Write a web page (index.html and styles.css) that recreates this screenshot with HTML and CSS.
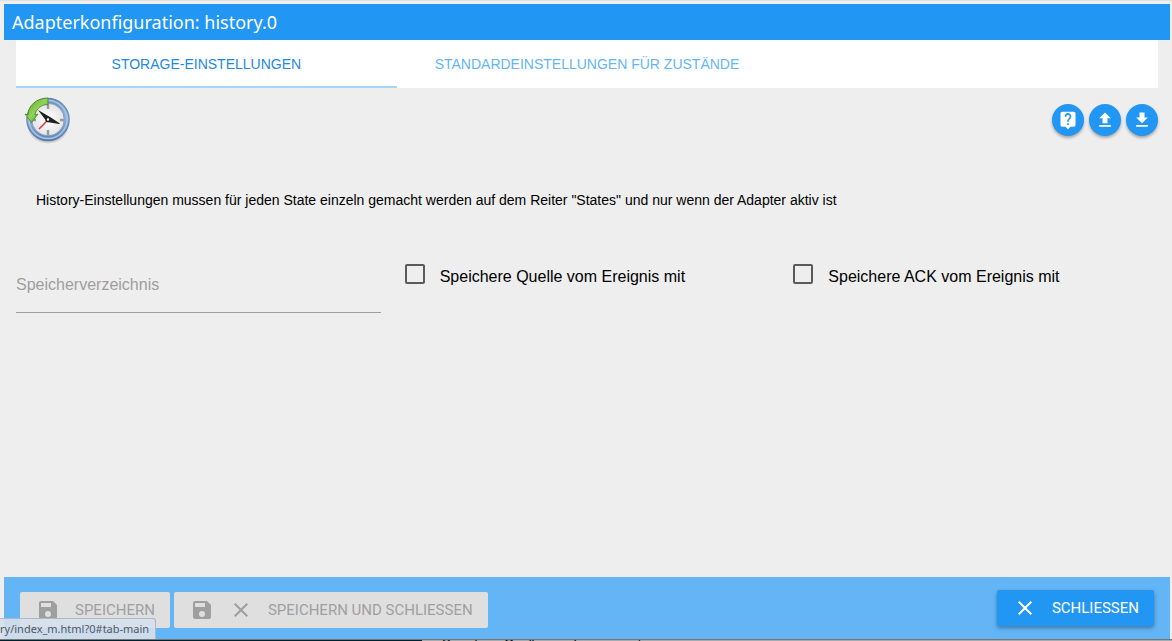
FILE: index.html
```html
<!DOCTYPE html>
<html lang="de">
<head>
<meta charset="utf-8">
<title>Adapterkonfiguration: history.0</title>
<link rel="stylesheet" href="styles.css">
</head>
<body>
<svg class="sprite" aria-hidden="true">
  <symbol id="save" viewBox="0 0 24 24"><path d="M17 3H5a2 2 0 0 0-2 2v14a2 2 0 0 0 2 2h14a2 2 0 0 0 2-2V7l-4-4zm-5 16a3 3 0 1 1 0-6 3 3 0 0 1 0 6zm3-10H5V5h10v4z"/></symbol>
  <symbol id="close" viewBox="0 0 24 24"><path d="M19 6.41 17.59 5 12 10.59 6.41 5 5 6.41 10.59 12 5 17.59 6.41 19 12 13.41 17.59 19 19 17.59 13.41 12z"/></symbol>
</svg>
<div class="dialog">
  <header class="titlebar"><h1 class="title">Adapterkonfiguration: history.0</h1></header>
  <nav class="tabs">
    <a class="tab tab-active" href="#tab-main">Storage-Einstellungen</a>
    <a class="tab" href="#tab-default">Standardeinstellungen für Zustände</a>
  </nav>
  <main class="content">
    <div class="toolbar">
      <svg class="logo" viewBox="0 0 48 48" role="img" aria-label="history">
        <defs>
          <linearGradient id="rim" x1="0" y1="0" x2="0" y2="1"><stop offset="0" stop-color="#6c8fb9"/><stop offset=".45" stop-color="#8fb2dc"/><stop offset="1" stop-color="#5781b5"/></linearGradient>
          <linearGradient id="leaf" x1="0" y1="0" x2="1" y2="1"><stop offset="0" stop-color="#4fa028"/><stop offset=".5" stop-color="#96d257"/><stop offset="1" stop-color="#2f8a18"/></linearGradient>
          <radialGradient id="shade"><stop offset=".65" stop-color="#333" stop-opacity=".6"/><stop offset="1" stop-color="#333" stop-opacity="0"/></radialGradient>
          <radialGradient id="face"><stop offset="0" stop-color="#fff"/><stop offset="1" stop-color="#e4e4e4"/></radialGradient>
        </defs>
        <ellipse cx="24" cy="30" rx="21" ry="18" fill="url(#shade)"/>
        <circle cx="24" cy="23.5" r="21.3" fill="url(#rim)" stroke="#4a6f9f" stroke-width=".8"/>
        <circle cx="24" cy="23.5" r="19" fill="none" stroke="#a9c6e8" stroke-width="1.5"/>
        <circle cx="24" cy="23.5" r="16.3" fill="url(#face)" stroke="#7391b6" stroke-width=".8"/>
        <path d="M24 8v5M24 34v5M8 24h4M36 24h4" stroke="#9a9a9a" stroke-width="2.5"/>
        <path d="m23 25-8 8" stroke="#e32c36" stroke-width="1.5"/>
        <path d="m14 14 12 7 10 6.500-1 .5-12-2-3-4z" fill="#202020"/>
        <circle cx="24" cy="23.500" r="2" fill="#fff" stroke="#202020" stroke-width="1.500"/>
        <path d="M24 2v6.500C17 8.500 12 13 11 19l3-1-6.500 8.500L1 18l3 1C4 10 12 2 24 2z" fill="url(#leaf)" stroke="#3a821f" stroke-width=".8"/>
      </svg>
      <div class="actions">
        <button class="round" aria-label="Hilfe"><svg class="round-icon" viewBox="0 0 24 24"><path d="M19 2H5a2 2 0 0 0-2 2v14c0 1.100.9 2 2 2h4l3 3 3-3h4a2 2 0 0 0 2-2V4a2 2 0 0 0-2-2zm-6 16h-2v-2h2v2zm2.070-7.750-.9.920C13.450 11.900 13 12.500 13 14h-2v-.5c0-1.100.45-2.100 1.170-2.830l1.240-1.260A2 2 0 1 0 10 8H8a4 4 0 1 1 7.070 2.250z"/></svg></button>
        <button class="round" aria-label="Hochladen"><svg class="round-icon" viewBox="0 0 24 24"><path d="M9 16h6v-6h4l-7-7-7 7h4zm-4 2h14v2H5z"/></svg></button>
        <button class="round" aria-label="Herunterladen"><svg class="round-icon" viewBox="0 0 24 24"><path d="M19 9h-4V3H9v6H5l7 7 7-7zM5 18v2h14v-2H5z"/></svg></button>
      </div>
    </div>
    <p class="note">History-Einstellungen mussen für jeden State einzeln gemacht werden auf dem Reiter "States" und nur wenn der Adapter aktiv ist</p>
    <div class="row">
      <div class="field"><label class="field-label" for="dir">Speicherverzeichnis</label><input class="field-input" id="dir" type="text"></div>
      <div class="option"><input class="box" id="source" type="checkbox"><label class="option-label" for="source">Speichere Quelle vom Ereignis mit</label></div>
      <div class="option"><input class="box" id="ack" type="checkbox"><label class="option-label" for="ack">Speichere ACK vom Ereignis mit</label></div>
    </div>
  </main>
  <footer class="footer">
    <button class="btn" disabled><svg class="icon"><use href="#save"/></svg>Speichern</button>
    <button class="btn" disabled><svg class="icon"><use href="#save"/></svg><svg class="icon"><use href="#close"/></svg>Speichern und schliessen</button>
    <button class="btn btn-primary"><svg class="icon"><use href="#close"/></svg>Schliessen</button>
  </footer>
</div>
<div class="backdrop"><div class="backdrop-dark"></div><div class="backdrop-text">Speichere Quelle vom Ereignis mit</div></div>
<div class="status">ry/index_m.html?0#tab-main</div>
</body>
</html>
```

FILE: styles.css
```css
* { box-sizing: border-box; }
body {
  margin: 0;
  min-height: 100vh;
  display: flex;
  flex-direction: column;
  position: relative;
  border-top: 1px solid #e0e0e0;
  background: #eee;
  color: #000;
  font-family: "Liberation Sans", Arial, sans-serif;
}
.sprite { display: none; }
.dialog {
  flex: 1;
  display: flex;
  flex-direction: column;
  padding: 3px 2px 0 4px;
}
.titlebar { background: #2196f3; padding: 0 8px; }
.title {
  margin: 0;
  color: #fff;
  font: 400 18px/36px "Noto Sans", "Open Sans", sans-serif;
}
.tabs {
  display: grid;
  grid-template-columns: repeat(3, 1fr);
  margin: 0 12px;
  height: 48px;
  background: #fff;
}
.tab {
  color: #64b5f6;
  font-size: 14px;
  line-height: 48px;
  text-align: center;
  text-decoration: none;
  text-transform: uppercase;
}
.tab-active { color: #1e88e5; box-shadow: inset 0 -2px #a6d5fa; }
.content { flex: 1; }
.toolbar {
  display: flex;
  justify-content: space-between;
  align-items: center;
  padding: 8px 12px 8px 20px;
}
.logo { width: 48px; height: 48px; }
.actions { display: flex; gap: 5px; }
.round {
  width: 32px;
  height: 32px;
  padding: 0;
  border: 0;
  border-radius: 50%;
  display: grid;
  place-items: center;
  background: #2196f3;
  box-shadow: 0 2px 3px rgba(0, 0, 0, .3);
}
.round-icon { width: 20px; height: 20px; fill: #fff; }
.note { margin: 36px 32px 0; font-size: 14px; line-height: 24px; }
.row { display: grid; grid-template-columns: repeat(3, 1fr); margin-top: 52px; }
.field { display: grid; padding: 0 12px; }
.field-label, .field-input { grid-area: 1 / 1; }
.field-label { padding-top: 8px; color: #9e9e9e; font-size: 16px; line-height: 26px; }
.field-input {
  width: 100%;
  height: 49px;
  padding: 16px 0 0;
  border: 0;
  border-bottom: 1px solid #9e9e9e;
  background: transparent;
  font: inherit;
}
.option { display: flex; align-items: flex-start; gap: 15px; padding: 0 12px; }
.box {
  appearance: none;
  width: 20px;
  height: 20px;
  margin: 0;
  border: 2px solid #5a5a5a;
  border-radius: 2px;
}
.option-label { font-size: 16px; line-height: 26px; }
.footer {
  display: flex;
  align-items: flex-end;
  gap: 4px;
  padding: 13px 16px 11px;
  background: #64b5f6;
}
.btn {
  display: flex;
  align-items: center;
  height: 36px;
  padding: 0 15px 0 16px;
  gap: 15px;
  border: 0;
  border-radius: 2px;
  background: #dfdfdf;
  color: #9f9f9f;
  font: 400 15px Roboto, sans-serif;
  text-transform: uppercase;
}
.btn-primary {
  margin: 0 0 2px auto;
  background: #2196f3;
  color: #fff;
  box-shadow: 0 2px 4px rgba(0, 0, 0, .35);
}
.icon { width: 24px; height: 24px; fill: currentColor; }
.backdrop { display: flex; height: 2px; overflow: hidden; background: #aaa; border-top: 1px solid #777; }
.backdrop-dark { width: 36%; background: #02202c; }
.backdrop-text { padding-left: 20px; font-size: 13px; line-height: 8px; }
.status {
  position: absolute;
  left: 0;
  bottom: 2px;
  padding: 0 6px 0 0;
  border: 1px solid #a9b9c9;
  border-width: 1px 1px 0 0;
  border-radius: 0 3px 0 0;
  background: rgba(214, 224, 235, .92);
  color: #4f5864;
  font: 11px/20px "Noto Sans", "Open Sans", sans-serif;
}
```
